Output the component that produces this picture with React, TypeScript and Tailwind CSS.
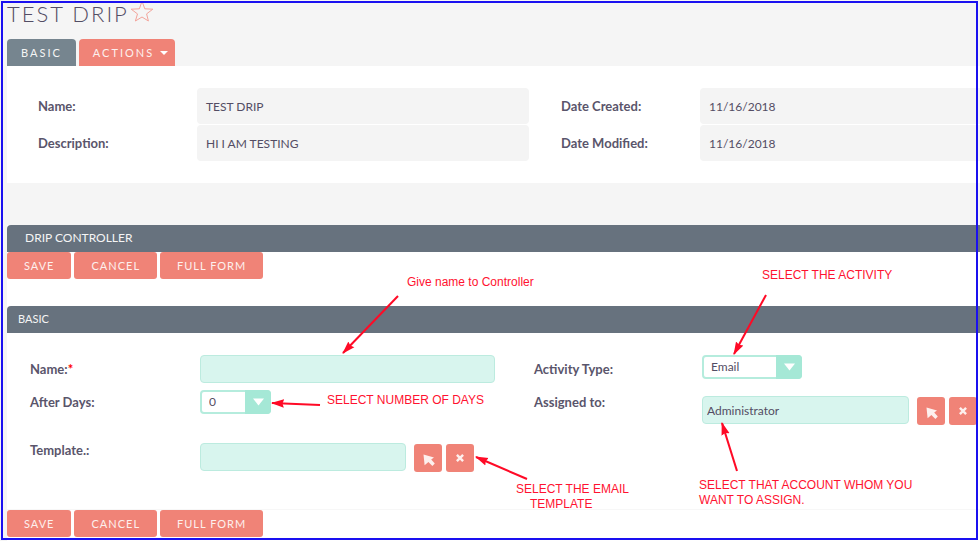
import React, { useState } from "react";

interface Arrow {
  id: string;
  from: [number, number];
  to: [number, number];
}

const ARROWS: Arrow[] = [
  { id: "name", from: [398, 296], to: [343, 353] },
  { id: "activity", from: [766, 295], to: [734, 354] },
  { id: "days", from: [320, 405], to: [272, 403] },
  { id: "template", from: [527, 479], to: [476, 457] },
  { id: "account", from: [737, 471], to: [722, 423] },
];

const DETAILS = [
  [
    { label: "Name:", value: "TEST DRIP" },
    { label: "Date Created:", value: "11/16/2018" },
  ],
  [
    { label: "Description:", value: "HI I AM TESTING" },
    { label: "Date Modified:", value: "11/16/2018" },
  ],
];

// ---------- form controls ----------

function FormButtons() {
  return (
    <div className="flex gap-[3px]">
      {["SAVE", "CANCEL", "FULL FORM"].map((label) => (
        <button
          key={label}
          type="button"
          className="h-[27px] rounded-[3px] bg-[#f08377] px-[17px] pt-0.5 text-[11px] tracking-[1px] text-[#fdf0ee]"
        >
          {label}
        </button>
      ))}
    </div>
  );
}

function LookupButtons() {
  return (
    <div className="ml-2 flex shrink-0 gap-1 pt-px">
      <button type="button" aria-label="Select" className="flex size-7 items-center justify-center rounded-[3px] bg-[#f08377]">
        <svg viewBox="0 0 12 12" className="mt-1 ml-0.5 size-3" fill="#fdf0ee">
          <path d="M0.5 0.5 L11 3.4 L8.2 5.6 L11.8 9.6 L9.4 11.9 L5.4 8 L1.6 11.2 Z" />
        </svg>
      </button>
      <button type="button" aria-label="Clear" className="flex size-7 items-center justify-center rounded-[3px] bg-[#f08377]">
        <svg viewBox="0 0 8 8" className="size-2" stroke="#fdf0ee" strokeWidth="2.4">
          <path d="M0.9 0.9 L7.1 7.1 M7.1 0.9 L0.9 7.1" />
        </svg>
      </button>
    </div>
  );
}

interface SelectProps {
  id: string;
  options: string[];
  className: string;
}

function Select({ id, options, className }: SelectProps) {
  return (
    <div className={`relative h-6 ${className}`}>
      <select
        id={id}
        className="block h-full w-full appearance-none rounded border-2 border-[#b5ecdd] bg-white pr-6 pl-[7px] text-xs text-[#534d64] outline-none"
      >
        {options.map((option) => (
          <option key={option}>{option}</option>
        ))}
      </select>
      <span className="pointer-events-none absolute inset-y-0 right-0 flex w-[26px] items-center justify-center rounded-r bg-[#a5e8d6]">
        <svg viewBox="0 0 11 8" className="h-2 w-[11px]" fill="#fff">
          <path d="M0 0.5 H11 L5.5 7.5 Z" />
        </svg>
      </span>
    </div>
  );
}

const labelClass = "text-[13px] leading-7 font-bold text-[#5a556b]";
const inputClass =
  "h-7 min-w-0 flex-1 rounded border border-[#bcebdf] bg-[#d8f5ee] px-1 text-xs text-[#534d64] outline-none";
const noteClass = "absolute text-xs leading-[15px] text-[#ff1230]";

export default function App() {
  const [name, setName] = useState("");
  const [template, setTemplate] = useState("");
  const [assignedTo, setAssignedTo] = useState("Administrator");

  return (
    <div className="relative min-h-screen overflow-hidden bg-[#f5f5f5] pl-[7px] font-['Lato',sans-serif] text-[#534d64]">
      {/* Title */}
      <header className="flex h-[39px] items-start">
        <h1 className="text-[22px] leading-7 font-light tracking-[2px]">TEST DRIP</h1>
        <svg viewBox="0 0 24 24" className="ml-px size-6" fill="none" stroke="#f3a49b" strokeWidth="1">
          <path d="M12 1.2 L14.8 8.8 L22.8 9.2 L16.6 13.9 L18.4 21 L12 17 L5.4 21 L7.5 13.9 L1.2 9.2 L9.4 8.8 Z" />
        </svg>
      </header>

      {/* Tabs */}
      <nav className="flex gap-[3px]">
        <button type="button" className="h-[27px] rounded-t bg-[#76858f] px-3.5 pt-0.5 text-[11px] tracking-[2px] text-[#f5f5f5]">
          BASIC
        </button>
        <button
          type="button"
          className="flex h-[27px] items-center gap-1.5 rounded-t bg-[#f08377] pt-0.5 pr-[7px] pl-3.5 text-[11px] tracking-[2px] text-[#fdf0ee]"
        >
          ACTIONS
          <svg viewBox="0 0 8 4" className="mb-0.5 h-1 w-2" fill="#fff">
            <path d="M0 0 H8 L4 4 Z" />
          </svg>
        </button>
      </nav>

      {/* Record details */}
      <section className="flex flex-col gap-px bg-white pt-[22px] pb-[22px] pl-[31px]">
        {DETAILS.map((row) => (
          <dl
            key={row[0].label}
            className="grid grid-cols-[159px_minmax(0,332fr)_32px_139px_minmax(0,280fr)] text-xs"
          >
            <dt className="text-[13px] leading-9 font-bold text-[#5a556b]">{row[0].label}</dt>
            <dd className="h-9 rounded bg-[#f4f4f4] px-[9px] leading-[38px]">{row[0].value}</dd>
            <dt className="col-start-4 text-[13px] leading-9 font-bold text-[#5a556b]">{row[1].label}</dt>
            <dd className="h-9 rounded-l bg-[#f4f4f4] px-[9px] leading-[38px]">{row[1].value}</dd>
          </dl>
        ))}
      </section>

      {/* Controller form */}
      <section className="mt-[42px] bg-white">
        <h2 className="h-[27px] rounded-tl bg-[#67727e] pl-[18px] text-xs leading-[26px] text-[#f5f5f5]">
          DRIP CONTROLLER
        </h2>
        <FormButtons />
        <h3 className="mt-[27px] h-[27px] rounded-tl bg-[#67727e] pl-[11px] text-[11px] leading-[26px] text-[#f5f5f5]">
          BASIC
        </h3>

        <form className="grid grid-cols-[170px_minmax(0,295fr)_39px_168px_minmax(0,278fr)] border-b border-[#f7f7f7] pt-[22px] pb-[37px] pl-[23px]">
          <label htmlFor="name" className={labelClass}>
            Name:<span className="text-[#ff0000]">*</span>
          </label>
          <div className="flex">
            <input id="name" value={name} onChange={(e) => setName(e.target.value)} className={inputClass} />
          </div>
          <label htmlFor="activity" className={`col-start-4 ${labelClass}`}>
            Activity Type:
          </label>
          <Select id="activity" options={["Email", "Call", "Meeting", "Task"]} className="w-[100px]" />

          <label htmlFor="days" className={`mt-[5px] ${labelClass}`}>
            After Days:
          </label>
          <div className="pt-[7px]">
            <Select id="days" options={["0", "1", "2", "3", "4", "5"]} className="w-[71px]" />
          </div>
          <label htmlFor="assigned" className={`col-start-4 mt-[5px] ${labelClass}`}>
            Assigned to:
          </label>
          <div className="flex pt-[13px] pr-[3px]">
            <input
              id="assigned"
              value={assignedTo}
              onChange={(e) => setAssignedTo(e.target.value)}
              className={inputClass}
            />
            <LookupButtons />
          </div>

          <label htmlFor="template" className={`mt-[11px] ${labelClass}`}>
            Template.:
          </label>
          <div className="flex pt-[18px] pr-[21px]">
            <input
              id="template"
              value={template}
              onChange={(e) => setTemplate(e.target.value)}
              className={inputClass}
            />
            <LookupButtons />
          </div>
        </form>
        <FormButtons />
        <div className="h-1" />
      </section>

      {/* Notes drawn over the form */}
      <div className="pointer-events-none absolute inset-0 font-['Liberation_Sans',sans-serif]">
        <svg className="absolute inset-0 h-full w-full" stroke="#ff0a26" strokeWidth="2">
          <defs>
            <marker
              id="head"
              markerUnits="userSpaceOnUse"
              markerWidth="14"
              markerHeight="10"
              refX="12"
              refY="5"
              orient="auto"
            >
              <path d="M0 0.8 L13 5 L0 9.2 L1.5 5 Z" fill="#ff0a26" stroke="none" />
            </marker>
          </defs>
          {ARROWS.map(({ id, from, to }) => (
            <line key={id} x1={from[0]} y1={from[1]} x2={to[0]} y2={to[1]} markerEnd="url(#head)" />
          ))}
        </svg>
        <p className={`top-[275px] left-[407px] ${noteClass}`}>Give name to Controller</p>
        <p className={`top-[268px] left-[762px] ${noteClass}`}>SELECT THE ACTIVITY</p>
        <p className={`top-[393px] left-[327px] ${noteClass}`}>SELECT NUMBER OF DAYS</p>
        <p className={`top-[482px] left-[516px] ${noteClass}`}>
          SELECT THE EMAIL
          <span className="block pl-3.5">TEMPLATE</span>
        </p>
        <p className={`top-[478px] left-[699px] ${noteClass}`}>
          SELECT THAT ACCOUNT WHOM YOU
          <br />
          WANT TO ASSIGN.
        </p>
      </div>

      {/* Outline */}
      <div className="pointer-events-none absolute top-px right-[2px] bottom-px left-px border-2 border-[#1a10f0]" />
    </div>
  );
}
